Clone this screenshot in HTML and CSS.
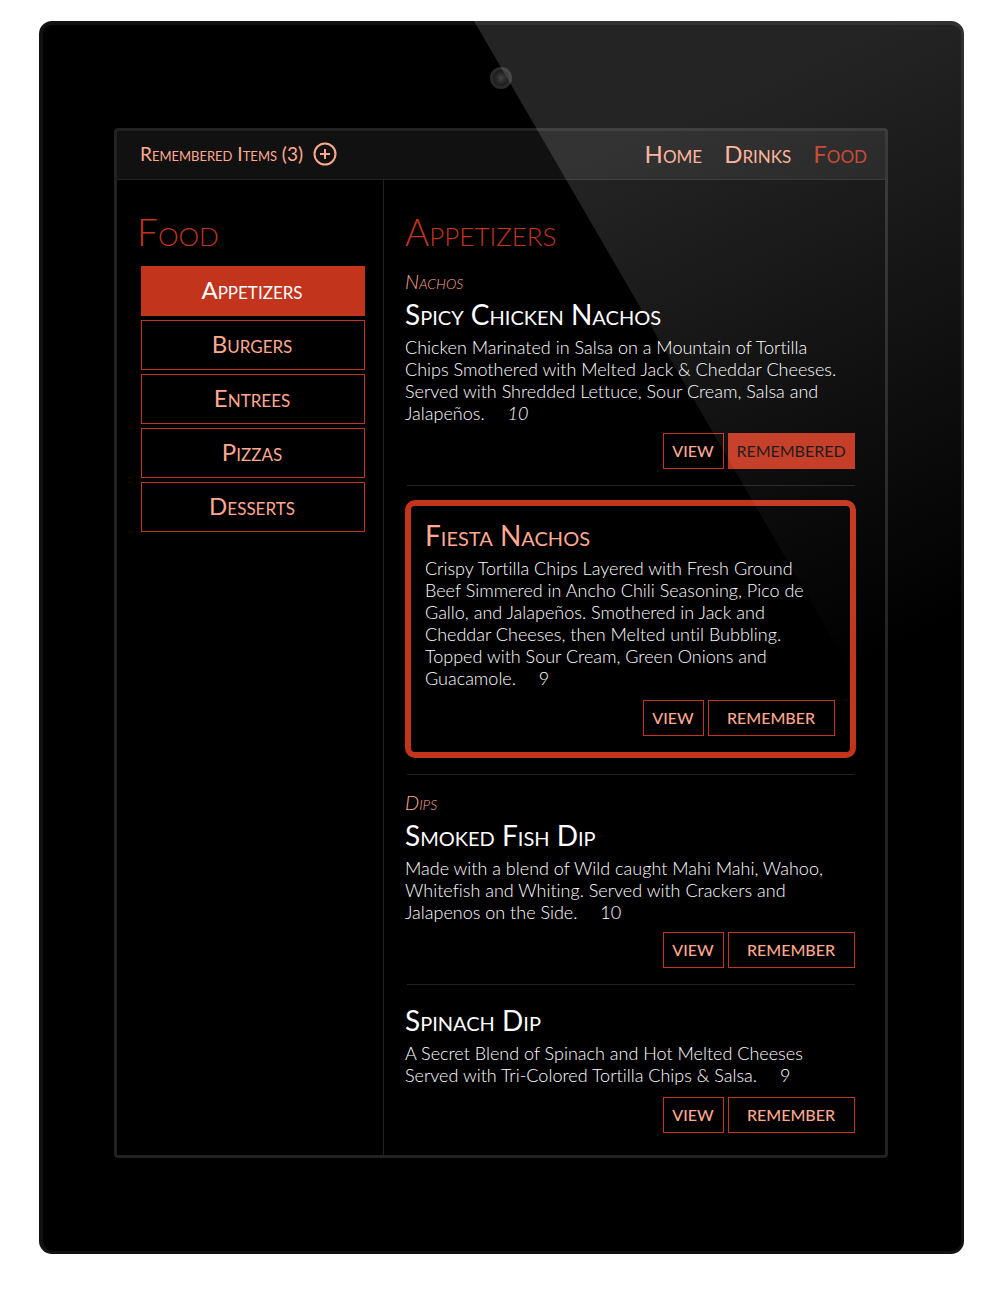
FILE: index.html
```html
<!DOCTYPE html>
<html lang="en">
<head>
<meta charset="utf-8">
<meta name="viewport" content="width=device-width, initial-scale=1">
<title>Food Menu</title>
<link rel="stylesheet" href="styles.css">
</head>
<body>
<div class="device">
  <div class="camera"></div>
  <div class="screen">
    <header class="topbar">
      <div class="saved">
        <span class="saved-label">Remembered Items (3)</span>
        <button class="icon-button" type="button" aria-label="Show remembered items">
          <svg width="24" height="24" viewBox="0 0 24 24" fill="none" stroke="currentColor" stroke-width="2"><circle cx="12" cy="12" r="10.5"/><path d="M12 7v10M7 12h10"/></svg>
        </button>
      </div>
      <nav class="main-nav">
        <a href="#home">Home</a>
        <a href="#drinks">Drinks</a>
        <a href="#food" class="current">Food</a>
      </nav>
    </header>
    <div class="columns">
      <aside class="sidebar">
        <h1 class="heading">Food</h1>
        <nav class="categories">
          <a href="#appetizers" class="active">Appetizers</a>
          <a href="#burgers">Burgers</a>
          <a href="#entrees">Entrees</a>
          <a href="#pizzas">Pizzas</a>
          <a href="#desserts">Desserts</a>
        </nav>
      </aside>
      <main class="menu">
        <h2 class="heading">Appetizers</h2>
        <h3 class="group">Nachos</h3>
        <article class="item">
          <h4 class="title">Spicy Chicken Nachos</h4>
          <p class="text">Chicken Marinated in Salsa on a Mountain of Tortilla<br>Chips Smothered with Melted Jack &amp; Cheddar Cheeses.<br>Served with Shredded Lettuce, Sour Cream, Salsa and<br>Jalapeños. <em class="price">10</em></p>
          <div class="actions"><button type="button" class="btn">VIEW</button><button type="button" class="btn btn-wide btn-on">REMEMBERED</button></div>
        </article>
        <hr class="rule">
        <article class="item item-selected">
          <h4 class="title">Fiesta Nachos</h4>
          <p class="text">Crispy Tortilla Chips Layered with Fresh Ground<br>Beef Simmered in Ancho Chili Seasoning, Pico de<br>Gallo, and Jalapeños. Smothered in Jack and<br>Cheddar Cheeses, then Melted until Bubbling.<br>Topped with Sour Cream, Green Onions and<br>Guacamole. <span class="price">9</span></p>
          <div class="actions"><button type="button" class="btn">VIEW</button><button type="button" class="btn btn-wide">REMEMBER</button></div>
        </article>
        <hr class="rule">
        <h3 class="group">Dips</h3>
        <article class="item">
          <h4 class="title">Smoked Fish Dip</h4>
          <p class="text">Made with a blend of Wild caught Mahi Mahi, Wahoo,<br>Whitefish and Whiting. Served with Crackers and<br>Jalapenos on the Side. <span class="price">10</span></p>
          <div class="actions"><button type="button" class="btn">VIEW</button><button type="button" class="btn btn-wide">REMEMBER</button></div>
        </article>
        <hr class="rule">
        <article class="item">
          <h4 class="title">Spinach Dip</h4>
          <p class="text">A Secret Blend of Spinach and Hot Melted Cheeses<br>Served with Tri-Colored Tortilla Chips &amp; Salsa. <span class="price">9</span></p>
          <div class="actions"><button type="button" class="btn">VIEW</button><button type="button" class="btn btn-wide">REMEMBER</button></div>
        </article>
      </main>
    </div>
  </div>
  <div class="gloss"></div>
</div>
</body>
</html>
```
FILE: styles.css
```css
:root {
  --red: #c3341d;
  --peach: #ffa98f;
  --line: #222;
}

* { box-sizing: border-box; }

body {
  margin: 0;
  padding: 21px 36px 46px 39px;
  background: #fff;
  color: #fff;
  font-family: Lato, "Liberation Sans", sans-serif;
  font-variant-ligatures: none;
}

h1, h2, h3, h4, p { margin: 0; font-weight: 400; }
a { color: inherit; text-decoration: none; }
button { font-family: inherit; cursor: pointer; }

.device {
  position: relative;
  padding: 42px 73px 93px 71px;
  background: #000;
  border: 4px solid #111;
  border-right-width: 3px;
  border-bottom-width: 3px;
  border-radius: 13px;
}

.camera {
  width: 22px;
  height: 22px;
  margin: 0 auto 39px;
  border: 3px solid #2b2b2b;
  border-radius: 50%;
  background: radial-gradient(circle, #444 0, #2a2a2a 40%, #0c0c0c 100%);
}

.screen {
  border: 3px solid var(--line);
  border-radius: 4px;
}

/* Diagonal light reflection across the glass */
.gloss {
  position: absolute;
  top: -4px;
  right: -3px;
  width: 490px;
  height: 720px;
  border-top-right-radius: 13px;
  background: linear-gradient(155deg, rgba(255, 255, 255, .14) 180px, rgba(255, 255, 255, 0) 750px);
  clip-path: polygon(0 0, 100% 0, 100% 100%, 418px 100%);
  pointer-events: none;
}

.saved-label,
.main-nav,
.categories,
.heading,
.group,
.title { font-variant-caps: small-caps; }

.topbar {
  display: flex;
  justify-content: space-between;
  align-items: center;
  height: 49px;
  padding: 0 18px 2px 23px;
  background: #111;
  border-bottom: 1px solid var(--line);
  color: var(--peach);
}

.saved { display: flex; align-items: center; gap: 10px; }
.saved-label { font-size: 19px; line-height: 24px; }

.icon-button {
  display: flex;
  padding: 0;
  border: 0;
  background: none;
  color: inherit;
}

.main-nav { display: flex; gap: 22px; font-size: 24px; line-height: 30px; }
.main-nav .current { color: var(--red); }

.columns { display: flex; }

.sidebar {
  flex: 0 0 267px;
  padding: 30px 18px 24px 20px;
  border-right: 1px solid var(--line);
}

.heading {
  color: var(--red);
  font-size: 37px;
  font-weight: 300;
  line-height: 44px;
}

.categories {
  display: flex;
  flex-direction: column;
  gap: 4px;
  margin: 12px 0 0 4px;
}
.categories a {
  height: 50px;
  padding-right: 2px;
  border: 1px solid var(--red);
  color: var(--peach);
  font-size: 24px;
  line-height: 46px;
  text-align: center;
}
.categories .active { background: var(--red); color: #fff; }

.menu { flex: 1; padding: 30px 29px 22px 21px; }

.group {
  margin-top: 15px;
  color: var(--peach);
  font-size: 20px;
  font-style: italic;
  font-weight: 300;
  line-height: 24px;
}
.group + .item { margin-top: 4px; }

.title { font-size: 28px; line-height: 34px; }

.text {
  margin-top: 5px;
  font-size: 18px;
  font-weight: 300;
  line-height: 22px;
}
.price { margin-left: 18px; }

.actions {
  display: flex;
  justify-content: flex-end;
  gap: 4px;
  margin: 9px 1px 0 0;
}

.btn {
  width: 61px;
  height: 36px;
  padding: 0 1px 2px 0;
  border: 1px solid var(--red);
  background: none;
  color: var(--peach);
  font-size: 16px;
  font-weight: 500;
}
.btn-wide { width: 127px; }
.btn-on { background: var(--red); color: #111; font-weight: 400; }

.rule {
  height: 1px;
  margin: 16px 1px 14px 2px;
  border: 0;
  background: var(--line);
}
.rule + .item:last-child { margin-top: 18px; }

.item-selected {
  padding: 12px 14px 16px;
  border: 6px solid var(--red);
  border-radius: 10px;
}
.item-selected .title { color: var(--peach); }
.item-selected .actions,
.item:last-child .actions { margin-top: 11px; }
```
